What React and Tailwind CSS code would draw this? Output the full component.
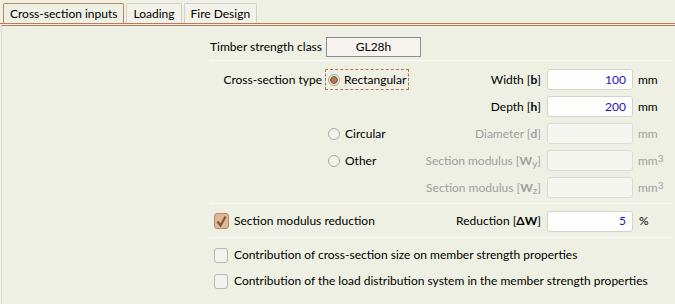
import React from "react";

const font = { fontFamily: 'Lato, "Noto Sans", sans-serif' };

function Radio({ checked }) {
  return (
    <span className="inline-flex items-center justify-center w-[12px] h-[12px] rounded-full border border-[#a8a8a0] bg-[#f4f4ee]">
      {checked && <span className="w-[8px] h-[8px] rounded-full bg-[#b07a50] border border-[#8a5a38]" />}
    </span>
  );
}

function Check({ checked }) {
  if (checked) {
    return (
      <span className="inline-flex items-center justify-center w-[15px] h-[16px] rounded-[3px] border border-[#b48a66] bg-[#dcb898]">
        <svg width="13" height="13" viewBox="0 0 13 13">
          <path d="M2.5 6.5 L5.5 10.5 L10.5 1.5" fill="none" stroke="#8a5530" strokeWidth="2.2" />
        </svg>
      </span>
    );
  }
  return <span className="inline-block w-[14px] h-[15px] rounded-[3px] border border-[#b8b8b0] bg-[#f4f4ee]" />;
}

function Field({ value, disabled }) {
  return (
    <div
      className={
        "w-[86px] h-[21px] rounded-[3px] border px-[6px] flex items-center justify-end text-[#2a10c8] " +
        (disabled ? "border-[#dcdcd4] bg-[#f6f6f0]" : "border-[#d4d4cc] bg-[#fefefc]")
      }
    >
      {value}
    </div>
  );
}

function Row({ left, label, value, disabled, sup }) {
  return (
    <div className="flex items-center h-[27px]">
      <div className="w-[220px] flex items-center whitespace-nowrap">{left}</div>
      <div
        className={
          "w-[112px] flex justify-end whitespace-nowrap " + (disabled ? "text-[#a0a0a0]" : "text-black")
        }
      >
        <span>{label}</span>
      </div>
      <div className="ml-[6px]">
        <Field value={value} disabled={disabled} />
      </div>
      <div className={"ml-[5px] " + (disabled ? "text-[#a0a0a0]" : "text-black")}>
        mm{sup && <sup className="text-[10px] relative -top-[3px]">3</sup>}
      </div>
    </div>
  );
}

export default function App() {
  return (
    <div className="w-[675px] h-[304px] bg-[#eef0e3] text-[12px] text-black overflow-hidden" style={font}>
      <div className="flex items-end h-[23px] pl-[3px] gap-[2px] whitespace-nowrap">
        <div className="h-[20px] px-[6px] flex items-center border border-b-0 border-[#c08660] rounded-t-[2px] bg-[#eef0e3]">
          Cross-section inputs
        </div>
        <div className="h-[20px] px-[6px] flex items-center border border-b-0 border-[#d0d0c8] rounded-t-[2px] bg-[#f2f2ea]">
          Loading
        </div>
        <div className="h-[20px] px-[6px] flex items-center border border-b-0 border-[#d0d0c8] rounded-t-[2px] bg-[#f2f2ea]">
          Fire Design
        </div>
      </div>
      <div className="border-t-[1px] border-[#b87c56] h-[2px]" />
      <div className="border-t-[1px] border-[#b87c56] border-l border-l-[#dcdcd0] ml-[1px] h-[280px]">
        <div className="ml-[207px] w-[463px] pt-[10px]">
          <div className="flex items-center h-[21px] whitespace-nowrap">
            <div className="w-[113px] flex justify-end">Timber strength class</div>
            <div className="ml-[4px] w-[95px] h-[20px] border border-[#8e8e8e] bg-[#f7f3ee] flex items-center justify-center">
              GL28h
            </div>
          </div>
          <div className="mt-[3px] h-[1px] bg-[#cfd0c6] border-b border-white" />
          <div className="mt-[5px]">
            <Row
              left={
                <>
                  <div className="w-[113px] flex justify-end">Cross-section type</div>
                  <div className="ml-[3px] h-[21px] px-[2px] border border-dashed border-[#b07a50] flex items-center gap-[4px]">
                    <Radio checked />
                    <span>Rectangular</span>
                  </div>
                </>
              }
              label={<>Width [<b>b</b>]</>}
              value="100"
            />
            <Row label={<>Depth [<b>h</b>]</>} value="200" />
            <Row
              left={
                <div className="ml-[119px] flex items-center gap-[5px]">
                  <Radio />
                  <span>Circular</span>
                </div>
              }
              label={<>Diameter [<b>d</b>]</>}
              disabled
            />
            <Row
              left={
                <div className="ml-[119px] flex items-center gap-[5px]">
                  <Radio />
                  <span>Other</span>
                </div>
              }
              label={<>Section modulus [<b>W</b><sub className="text-[10px]">y</sub>]</>}
              disabled
              sup
            />
            <Row
              label={<>Section modulus [<b>W</b><sub className="text-[10px]">z</sub>]</>}
              disabled
              sup
            />
          </div>
          <div className="mt-[2px] h-[1px] bg-[#cfd0c6] border-b border-white" />
          <div className="flex items-center h-[33px] pt-[1px] whitespace-nowrap">
            <div className="w-[220px] flex items-center gap-[5px] pl-[5px]">
              <Check checked />
              <span>Section modulus reduction</span>
            </div>
            <div className="w-[112px] flex justify-end">
              <span>Reduction [<b>ΔW</b>]</span>
            </div>
            <div className="ml-[6px]">
              <Field value="5" />
            </div>
            <div className="ml-[6px]">%</div>
          </div>
          <div className="h-[1px] bg-[#cfd0c6] border-b border-white" />
          <div className="flex items-center h-[26px] mt-[4px] gap-[6px] pl-[5px] whitespace-nowrap">
            <Check />
            <span>Contribution of cross-section size on member strength properties</span>
          </div>
          <div className="flex items-center h-[26px] gap-[6px] pl-[5px] whitespace-nowrap">
            <Check />
            <span>Contribution of the load distribution system in the member strength properties</span>
          </div>
        </div>
      </div>
    </div>
  );
}
